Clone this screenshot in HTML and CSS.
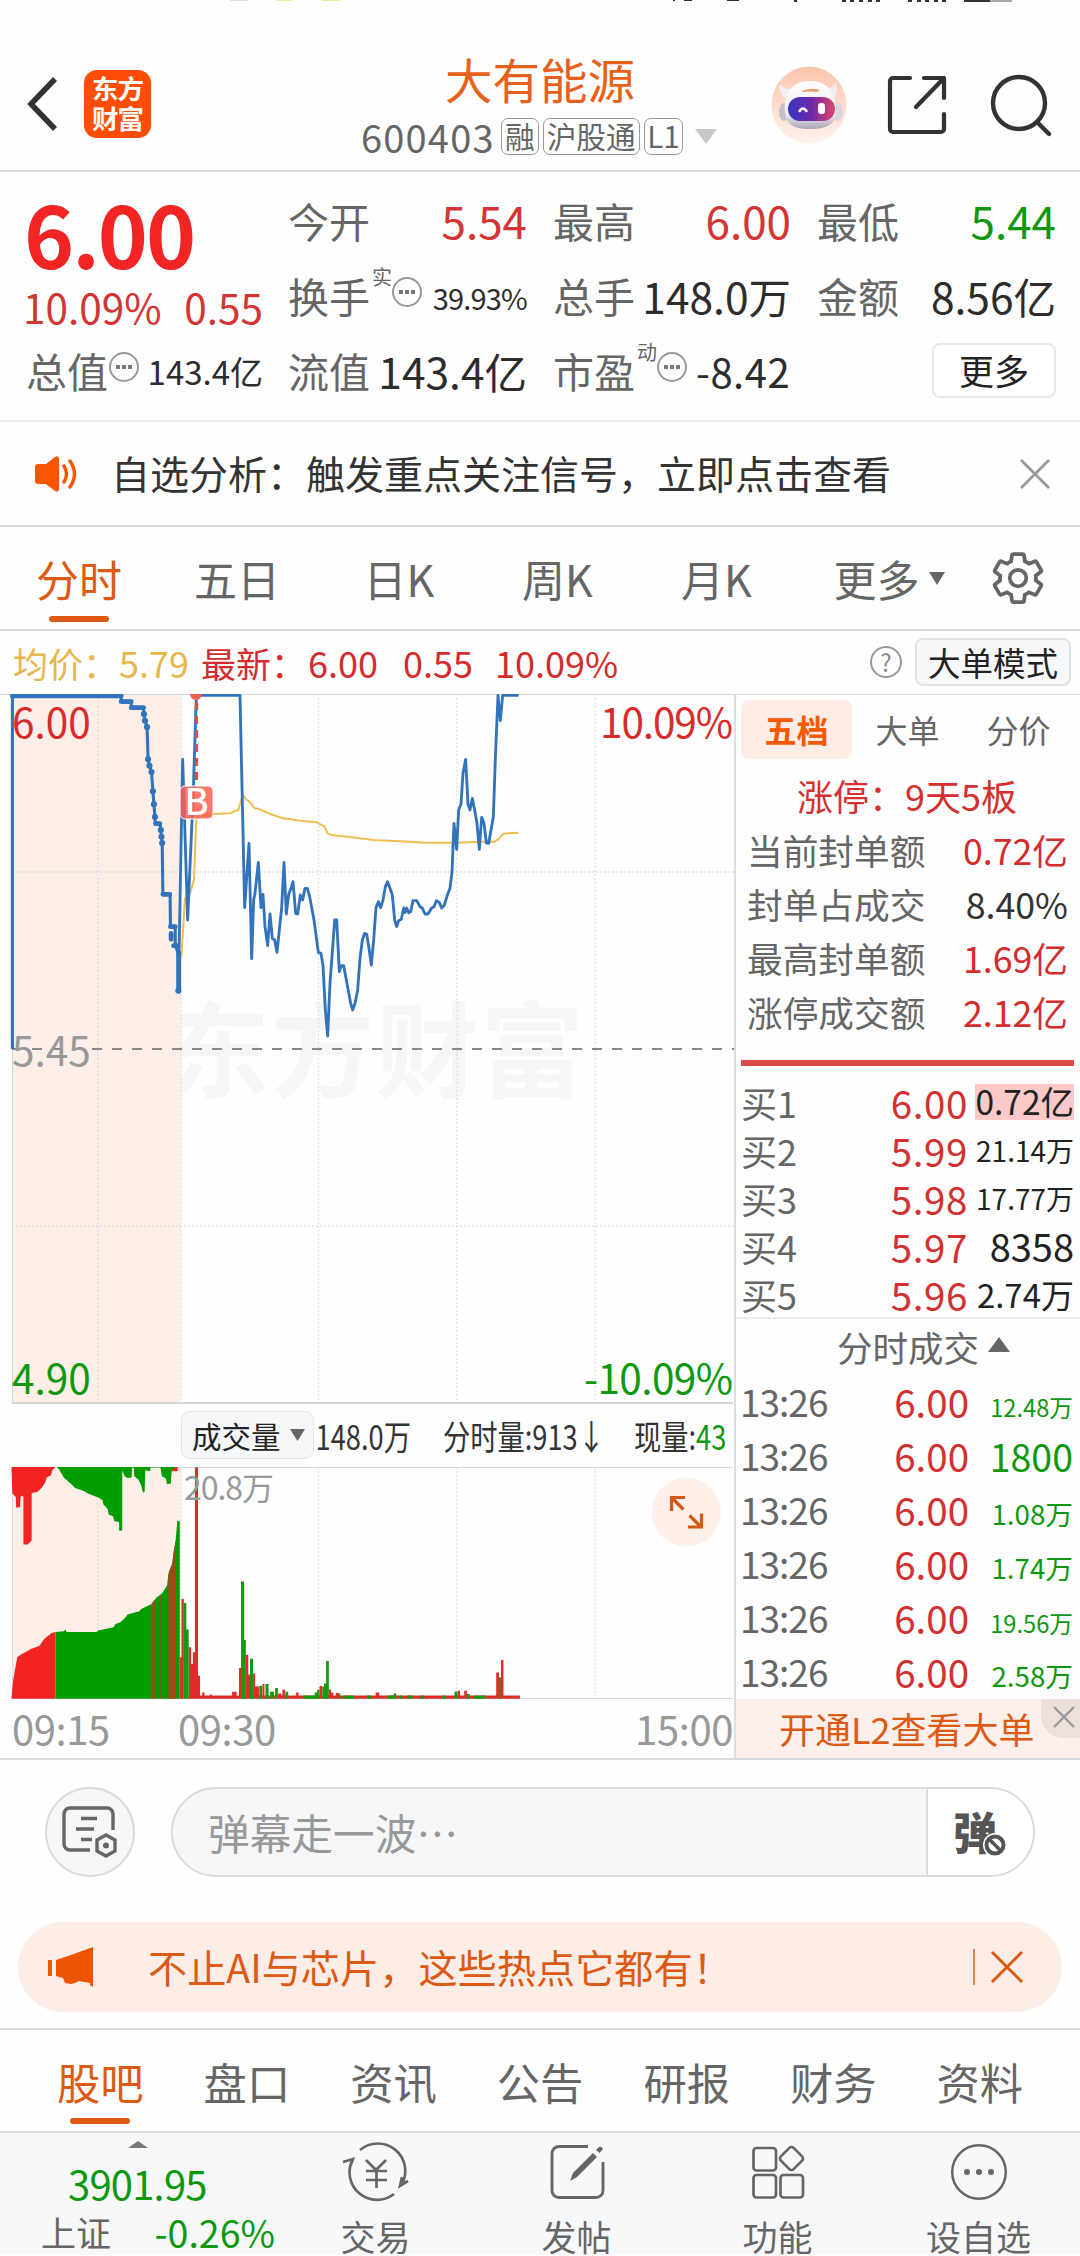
FILE: index.html
```html
<!DOCTYPE html>
<html lang="zh-CN">
<head>
<meta charset="utf-8">
<title>大有能源 600403</title>
<link rel="stylesheet" href="styles.css">
</head>
<body>
<div class="page">
  <svg class="status" width="1080" height="3" viewBox="0 0 1080 3">
    <path d="M230 0h18v1h-18z" fill="#f6d3e4"/><path d="M276 0h16v1h-16zM322 0h18v1h-18z" fill="#ecec9a"/>
    <path d="M673 0h2v1h-2zM684 0h8v1h-8zM727 0h12v1h-12zM794 0h3v2h-3zM842 0h4v2h-4zM850 0h4v2h-4zM859 0h4v2h-4zM868 0h4v2h-4zM876 0h4v2h-4zM908 0h4v2h-4zM917 0h4v2h-4zM925 0h4v2h-4zM934 0h4v2h-4zM942 0h4v2h-4zM964 0h26v2h-26z" fill="#333"/><path d="M990 0h22v2h-22z" fill="#aaa"/>
  </svg>

  <header class="header">
    <div class="header-left">
      <svg width="34" height="58" viewBox="0 0 34 58"><path d="M29 4 5 29l24 25" fill="none" stroke="#333" stroke-width="5.5"/></svg>
      <div class="logo"><span>东方</span><span>财富</span></div>
    </div>
    <div class="stock">
      <h1 class="stock-name">大有能源</h1>
      <div class="stock-sub">
        <span class="code">600403</span><span class="badge">融</span><span class="badge">沪股通</span><span class="badge badge-l1">L1</span>
        <svg class="sub-tri" width="22" height="15" viewBox="0 0 22 15"><path d="M0 0h22L11 15z" fill="#c9c9c9"/></svg>
      </div>
    </div>
    <div class="header-right">
      <svg width="76" height="78" viewBox="0 0 76 78">
        <defs>
          <linearGradient id="halo" x2="0" y2="1"><stop stop-color="#fdc5ab"/><stop offset="1" stop-color="#fff3ee"/></linearGradient>
          <linearGradient id="visor"><stop stop-color="#3a35c4"/><stop offset=".5" stop-color="#6c2aa8"/><stop offset="1" stop-color="#e2476b"/></linearGradient>
          <linearGradient id="helmet" x2="0" y2="1"><stop stop-color="#fff"/><stop offset=".7" stop-color="#ece9f2"/><stop offset="1" stop-color="#a9a5b5"/></linearGradient>
        </defs>
        <ellipse cx="38" cy="39" rx="37.5" ry="38.5" fill="url(#halo)"/>
        <ellipse cx="13" cy="46" rx="5" ry="9" fill="#c3bfcb"/><ellipse cx="67" cy="46" rx="5" ry="9" fill="#dad6df"/>
        <path d="M8 18q5 6 14 5l-6 10q-8-4-8-15zM65 16q-3 6-11 7l8 10q6-6 3-17z" fill="#f3eef2"/>
        <path d="M14 46C12 26 22 15 39 15s27 11 26 31c0 12-9 17-26 17S15 58 14 46z" fill="url(#helmet)"/>
        <rect x="17" y="31" width="47" height="24" rx="12" fill="url(#visor)"/>
        <path d="M28 46q4-7 8 0" fill="none" stroke="#fff" stroke-width="2.4"/><rect x="47" y="37" width="7" height="11" rx="3" fill="#fff"/>
        <path d="M31 25q9-4 18-1l-3 2q-7-1-15 0z" fill="#e5a06a"/>
      </svg>
      <svg width="60" height="60" viewBox="0 0 60 60" fill="none" stroke="#333" stroke-width="4.2" stroke-linecap="round" stroke-linejoin="round"><path d="M23 3H6a3 3 0 0 0-3 3v48a3 3 0 0 0 3 3h48a3 3 0 0 0 3-3V39M37 3h20v20M57 3 29 32"/></svg>
      <svg width="62" height="64" viewBox="0 0 62 64" fill="none" stroke="#333" stroke-width="4.4" stroke-linecap="round"><circle cx="29" cy="30" r="26"/><path d="M47 49 59 61"/></svg>
    </div>
  </header>

  <section class="quote">
    <div class="quote-main">
      <div class="price">6.00</div>
      <div class="change"><span>10.09%</span><span>0.55</span></div>
      <div class="cell"><span class="label">总值</span><svg class="dots" viewBox="0 0 32 32"><use href="#dots"/></svg><span class="val v33">143.4亿</span></div>
    </div>
    <div class="quote-grid">
      <div class="cell"><span class="label">今开</span><span class="val num red">5.54</span></div>
      <div class="cell"><span class="label">最高</span><span class="val num red">6.00</span></div>
      <div class="cell"><span class="label">最低</span><span class="val num green">5.44</span></div>
      <div class="cell"><span class="label">换手</span><sup>实</sup><svg class="dots" viewBox="0 0 32 32"><g id="dots"><circle cx="16" cy="16" r="14" fill="none" stroke="#999" stroke-width="2"/><path d="M8 14h4v4H8zM14 14h4v4h-4zM20 14h4v4h-4z" fill="#777"/></g></svg><span class="val v29">39.93%</span></div>
      <div class="cell"><span class="label">总手</span><span class="val">148.0万</span></div>
      <div class="cell"><span class="label">金额</span><span class="val">8.56亿</span></div>
      <div class="cell"><span class="label">流值</span><span class="val">143.4亿</span></div>
      <div class="cell"><span class="label">市盈</span><sup>动</sup><svg class="dots" viewBox="0 0 32 32"><use href="#dots"/></svg><span class="val v39">-8.42</span></div>
      <div class="cell"><button class="more">更多</button></div>
    </div>
  </section>

  <section class="notice">
    <svg width="46" height="38" viewBox="0 0 46 38"><path d="M2 12q0-3 3-3h8L22 2q4-2 4 2v30q0 4-4 2l-9-7H5q-3 0-3-3z" fill="#fa5500"/><path d="M31 11q5 8 0 16M37 6q9 13 0 26" fill="none" stroke="#fa5500" stroke-width="3.4" stroke-linecap="round"/></svg>
    <p>自选分析：触发重点关注信号，立即点击查看</p>
    <svg width="32" height="32" viewBox="0 0 32 32"><path d="m2 2 28 28M30 2 2 30" stroke="#999" stroke-width="2.8"/></svg>
  </section>

  <nav class="periods">
    <span class="active">分时</span><span>五日</span><span>日K</span><span>周K</span><span>月K</span>
    <span>更多<svg width="16" height="13" viewBox="0 0 16 13"><path d="M0 0h16L8 13z" fill="#666"/></svg></span>
    <span><svg width="60" height="60" viewBox="0 0 24 24" fill="none" stroke="#666" stroke-width="1.5"><path d="M19.14 12.94c.04-.3.06-.61.06-.94 0-.32-.02-.64-.07-.94l2.03-1.58c.18-.14.23-.41.12-.61l-1.92-3.32c-.12-.22-.37-.29-.59-.22l-2.39.96c-.5-.38-1.03-.7-1.62-.94l-.36-2.54c-.04-.24-.24-.41-.48-.41h-3.84c-.24 0-.43.17-.47.41l-.36 2.54c-.59.24-1.13.57-1.62.94l-2.39-.96c-.22-.08-.47 0-.59.22L2.74 8.87c-.12.21-.08.47.12.61l2.03 1.58c-.05.3-.09.63-.09.94s.02.64.07.94l-2.03 1.58c-.18.14-.23.41-.12.61l1.92 3.32c.12.22.37.29.59.22l2.39-.96c.5.38 1.03.7 1.62.94l.36 2.54c.05.24.24.41.48.41h3.84c.24 0 .44-.17.47-.41l.36-2.54c.59-.24 1.13-.56 1.62-.94l2.39.96c.22.08.47 0 .59-.22l1.92-3.32c.12-.22.07-.47-.12-.61l-2.01-1.58z"/><circle cx="12" cy="12" r="3.3"/></svg></span>
  </nav>

  <div class="info">
    <span class="yellow w107">均价：</span><span class="yellow w80">5.79</span><span class="red w108">最新：</span><span class="red w95">6.00</span><span class="red w94">0.55</span><span class="red">10.09%</span>
    <span class="help">?</span><button class="mode">大单模式</button>
  </div>

  <section class="market">
    <div class="charts">
      <svg class="chart" width="734" height="710" viewBox="0 694 734 710">
        <text class="watermark" x="166" y="1090" textLength="418">东方财富</text>
        <rect x="12" y="694" width="169" height="709" fill="#fdeee7"/>
        <g stroke="#d9d9d9" stroke-width="1.4" stroke-dasharray="1.5 2.5"><path d="M98 694v709M181 694v709M318.500 694v709M457 694v709M595 694v709M12 872h722M12 1226h722"/></g>
        <path d="M12.500 694v709M0 694.500h734" stroke="#d5d8da"/><path d="M12 1403h721" stroke="#d5d5d5" stroke-width="2"/>
        <path d="M12 1049h722" stroke="#888" stroke-width="2" stroke-dasharray="10 10"/>
        <text class="axis red" x="12" y="738">6.00</text><text class="axis red" x="733" y="738" text-anchor="end" textLength="133">10.09%</text>
        <text class="axis gray" x="12" y="1066">5.45</text>
        <text class="axis green" x="12" y="1394">4.90</text><text class="axis green" x="733" y="1394" text-anchor="end" textLength="149">-10.09%</text>
        <g fill="none" stroke-linejoin="round" transform="translate(160 680) scale(.33333)">
          <polyline stroke="#efbe4f" stroke-width="6" points="64,830 75,655 90,640 102,600 109,410 160,402 212,400 222,394 235,390 242,365 249,345 258,358 265,362 285,385 300,388 330,402 370,415 420,422 470,427 493,440 503,460 515,465 570,471 640,480 720,484 800,488 890,488 960,485 1003,485 1015,478 1030,461 1076,458"/>
          <polyline stroke="#3273bb" stroke-width="8.500" points="55,932 68,238 83,720 100,330 109,46 240,46 254,683 267,490 275,836 281,660 285,640 295,547 303,683 309,643 315,740 323,797 330,702 337,775 344,780 351,817 365,683 372,547 379,702 386,643 393,625 399,605 407,700 413,702 421,645 428,660 435,625 442,625 449,650 462,720 475,817 483,820 489,857 496,990 503,1068 510,910 517,817 524,720 530,720 538,875 544,857 551,857 558,895 572,970 578,990 585,970 593,930 600,835 607,780 614,760 620,762 627,805 634,855 641,780 648,683 655,665 662,683 669,660 676,620 683,605 690,625 697,645 704,720 710,740 716,722 724,718 731,684 735,698 740,684 746,698 752,695 759,662 770,662 780,680 787,684 795,702 804,702 815,684 822,680 829,662 838,668 845,684 853,675 862,645 870,625 876,577 882,430 890,508 896,390 903,373 909,280 917,238 924,373 930,390 937,355 944,390 951,430 958,508 965,412 972,430 979,489 986,490 993,450 1000,412 1006,238 1014,46 1021,122 1028,46 1076,46"/>
        </g>
        <g fill="none" stroke="#3273bb" stroke-linecap="round" stroke-linejoin="round" transform="translate(0 680) scale(.34435 .33333)">
          <polyline stroke-width="9" stroke-linecap="butt" points="36,1107 36,47 352,47 352,64 381,64 381,83 416,83 418,102 421,122 427,141 430,238 434,257 440,276 444,334 447,373 450,411 451,431 465,431 467,450 469,470 471,489 473,643 494,643 495,740 509,740 509,797 517,817 518,932"/>
          <path stroke-width="14" d="M36 48H352M352 65h29M381 83h36M452 431h12M473 643h20M495 740h14M497 760v18M504 797h12M519 817v115"/>
          <path stroke-width="18" d="M418 102h0M421 122h0M427 141h0M430 238h0M434 257h0M440 276h0M444 334h0M447 373h0M450 411h0M467 450h0M469 470h0M471 489h0M518 932h0"/>
        </g>
        <path d="M190 694h12a6 6 0 0 1-12 0z" fill="#f4604f"/>
        <path d="M196.500 702v85" stroke="#e8493f" stroke-width="3.200" stroke-dasharray="8 6"/>
        <rect x="180" y="786" width="33" height="33" rx="5" fill="#f95f50" fill-opacity=".85" stroke="#fff"/>
        <text class="marker" x="196.500" y="815" text-anchor="middle">B</text>
      </svg>
      <div class="volume-head">
        <button class="indicator">成交量<svg width="15" height="12" viewBox="0 0 15 12"><path d="M0 0h15L7.500 12z" fill="#666"/></svg></button>
        <span class="narrow n1">148.0万</span><span class="narrow n2">分时量:913↓</span><span class="narrow n3">现量:<b>43</b></span>
      </div>
      <svg class="chart" width="734" height="232" viewBox="0 1467 734 232">
        <rect x="12" y="1467" width="169" height="231" fill="#fdeee7"/>
        <path d="M98 1467v231M181 1467v231M318.500 1467v231M457 1467v231M595 1467v231" stroke="#d9d9d9" stroke-width="1.400" stroke-dasharray="1.5 2.5"/>
        <path d="M12 1467.500h721M12 1698.500h721M12.500 1467v231" stroke="#dcdcdc"/>
        <g transform="translate(0 1390) scale(.34435 .3342)">
          <path fill="#f22323" d="M33 228 36 310 46 320 47 352 58 350 60 318H68V462H80L92 450V308L108 305 122 292 132 275 135 262 148 255 152 240 163 228zM33 924 38 870 50 800 60 792 90 775 115 765 128 745 150 727 161 724V924zM498 228H516V243H498z"/>
          <path fill="#009d00" d="M163 228 172 238 185 262 205 280 218 293 245 303 255 310 285 322 298 330 300 342 312 355 316 373 328 378 332 393 346 395V422L355 420V240L362 258 370 263 382 262 384 232H388L390 258 402 268 410 285 415 307 420 305 422 240 436 243 437 232H466L470 258 482 265 485 282 496 280 499 238 521 228zM161 724 185 722 190 717 193 724H280L285 720 330 710 335 700 350 695 365 680 370 672 405 662 410 655 440 640 455 620 470 610 485 585 490 545 500 520 505 480 510 450 515 392H522V924H161z"/>
          <path fill="#8b5516" d="M439 642 451 626V924H439zM488 556 500 520 505 480 511 450V924H488z"/>
          <path fill="#c03a1c" d="M466 612h4V924h-4zM497 530h3V924h-3zM506 480h3V924h-3z"/>
          <path fill="#e32a2a" d="M522 800h5V924h-5zM527 625h7V924h-7zM548 770h7V924h-7zM555 820h6V924h-6zM560 785h7V924h-7zM566 231h9V924h-9zM575 855h6V924h-6zM581 914H1510V924H581zM587 905h7v15h-7zM609 911h6v9h-6zM674 903h13v17h-13zM694 832h7V924h-7zM714 792h7V924h-7zM721 852h6V924h-6zM735 848h6V924h-6zM741 887h11V924h-11zM762 880h6V924h-6zM808 908h9v16h-9zM820 897h8V924h-8zM860 905h7v19h-7zM928 886h8V924h-8zM955 896h6v28h-6zM961 905h7v19h-7zM975 907h10v17h-10zM1091 905h10v19h-10zM1330 900h6v24h-6zM1348 900h8v24h-8zM1441 845h8V924h-8zM1455 808h7V924h-7z"/>
          <path fill="#129a10" d="M534 637h7V924h-7zM541 717h7V924h-7zM700 573h9V924h-9zM709 748h5V924h-5zM726 804h9V924h-9zM753 885h8V924h-8zM771 880h9V924h-9zM784 903h12v21h-12zM799 892h8V924h-8zM829 903h8v21h-8zM880 914h34v10h-34zM914 905h7v19h-7zM921 897h7v27h-7zM936 888h5v36h-5zM941 878h6v46h-6zM947 811h8V924h-8zM985 909h4v15h-4zM998 914h30v10h-30zM1066 914h12v10h-12zM1125 914h18v10h-18zM1143 908h7v16h-7zM1160 914h8v10h-8zM1184 914h14v10h-14zM1222 914h10v10h-10zM1285 914h10v10h-10zM1320 902h9v22h-9zM1356 910h8v14h-8zM1376 914h34v10h-34z"/>
          <path fill="#6d6e10" d="M1449 860h6v64h-6z"/>
        </g>
        <text class="vol-label" x="184" y="1500" textLength="90">20.8万</text>
        <circle cx="686.500" cy="1512" r="34.500" fill="#feefe8"/>
        <path d="M671.500 1511v-13.500H685M673 1499l10.500 10.500M701.500 1513.500V1527H688M700 1526l-10.500-10.500" fill="none" stroke="#d65a16" stroke-width="3.200"/>
      </svg>
      <div class="times"><span>09:15</span><span>09:30</span><span>15:00</span></div>
    </div>

    <aside class="panel">
      <div class="panel-tabs"><span class="active">五档</span><span>大单</span><span>分价</span></div>
      <div class="limit-title">涨停：9天5板</div>
      <dl class="limit">
        <div><dt>当前封单额</dt><dd class="red">0.72亿</dd></div>
        <div><dt>封单占成交</dt><dd>8.40%</dd></div>
        <div><dt>最高封单额</dt><dd class="red">1.69亿</dd></div>
        <div><dt>涨停成交额</dt><dd class="red">2.12亿</dd></div>
      </dl>
      <div class="bar"></div>
      <div class="book">
        <div><span>买1</span><span class="p">6.00</span><span class="q q34 hl">0.72亿</span></div>
        <div><span>买2</span><span class="p">5.99</span><span class="q q28">21.14万</span></div>
        <div><span>买3</span><span class="p">5.98</span><span class="q q28">17.77万</span></div>
        <div><span>买4</span><span class="p">5.97</span><span class="q q37">8358</span></div>
        <div><span>买5</span><span class="p">5.96</span><span class="q q33">2.74万</span></div>
      </div>
      <div class="ticks-title">分时成交<svg width="22" height="15" viewBox="0 0 22 15"><path d="M0 15h22L11 0z" fill="#666"/></svg></div>
      <div class="ticks">
        <div><span>13:26</span><span class="p">6.00</span><span class="q q23">12.48万</span></div>
        <div><span>13:26</span><span class="p">6.00</span><span class="q q38">1800</span></div>
        <div><span>13:26</span><span class="p">6.00</span><span class="q q27">1.08万</span></div>
        <div><span>13:26</span><span class="p">6.00</span><span class="q q27">1.74万</span></div>
        <div><span>13:26</span><span class="p">6.00</span><span class="q q23">19.56万</span></div>
        <div><span>13:26</span><span class="p">6.00</span><span class="q q27">2.58万</span></div>
      </div>
      <div class="promo">开通L2查看大单<span class="promo-close"><svg width="22" height="22" viewBox="0 0 22 22"><path d="m1 1 20 20M21 1 1 21" stroke="#999" stroke-width="2.4"/></svg></span></div>
    </aside>
  </section>

  <section class="danmu">
    <div class="round">
      <svg width="58" height="54" viewBox="0 0 58 54" fill="none" stroke="#666" stroke-width="3.400"><path d="M52 25V9a6 6 0 0 0-6-6H9a6 6 0 0 0-6 6v30a6 6 0 0 0 6 6h20M20 13.500h16M15 24h18M20 34.500h11"/><path d="m45 30 9 5v11l-9 5-9-5V35z"/><circle cx="45" cy="40.500" r="3" fill="#666" stroke="none"/></svg>
    </div>
    <div class="danmu-box">
      <span class="placeholder">弹幕走一波⋯</span>
      <div class="danmu-toggle"><span>弹</span><svg width="26" height="26" viewBox="0 0 26 26"><circle cx="13" cy="13" r="12" fill="#fff"/><circle cx="13" cy="13" r="8.500" fill="#fff" stroke="#555" stroke-width="4"/><path d="m7 7 12 12" stroke="#555" stroke-width="3.500"/></svg></div>
    </div>
  </section>

  <section class="banner">
    <svg width="46" height="40" viewBox="0 0 46 40" fill="#ee5500"><path d="M0 13h4v16H0zM8 13l12-4L45 0v40l-3-2v-2l-11-2-4 2-4 1-6-1-2-5-7-2z"/></svg>
    <p>不止AI与芯片，这些热点它都有！</p>
    <i></i>
    <svg width="34" height="34" viewBox="0 0 34 34"><path d="m2 2 30 30M32 2 2 32" stroke="#dd5a14" stroke-width="3"/></svg>
  </section>

  <nav class="sections">
    <span class="active">股吧</span><span>盘口</span><span>资讯</span><span>公告</span><span>研报</span><span>财务</span><span>资料</span>
  </nav>

  <footer class="toolbar">
    <div class="index">
      <svg width="20" height="7" viewBox="0 0 20 7"><path d="M0 7h20L10 0z" fill="#777"/></svg>
      <div class="index-val">3901.95</div>
      <div class="index-row"><span>上证</span><span class="green">-0.26%</span></div>
    </div>
    <div class="tool"><svg width="68" height="60" viewBox="0 0 68 60" fill="none" stroke="#666" stroke-width="2.700"><path d="M18 8A27.500 27.500 0 0 1 60 42M52 52A27.500 27.500 0 0 1 11 17M1 20l10-3-3 8M66 39l-8 5 2-9M24 18l10 10 10-10M24 29h21M24 38h21M34.500 28v18"/></svg><span>交易</span></div>
    <div class="tool"><svg width="60" height="60" viewBox="0 0 60 60" fill="none" stroke="#666" stroke-width="2.900"><path d="M41 4.500H12a7 7 0 0 0-7 7v37a7 7 0 0 0 7 7h37a7 7 0 0 0 7-7V20"/><path d="m23 39 3-8L46 11l4 4-20 20zM49 8l3-3q3-1 4 2l-3.500 4z" fill="#666" stroke="none"/></svg><span>发帖</span></div>
    <div class="tool"><svg width="60" height="60" viewBox="0 0 60 60" fill="none" stroke="#666" stroke-width="2.700"><rect x="5.500" y="6" width="22.500" height="22.500" rx="3"/><rect x="5.500" y="33" width="22.500" height="22.500" rx="3"/><rect x="32.500" y="33" width="22.500" height="22.500" rx="3"/><rect x="34.500" y="7.500" width="18" height="18" rx="3" transform="rotate(45 43.500 16.500)"/></svg><span>功能</span></div>
    <div class="tool"><svg width="60" height="60" viewBox="0 0 60 60"><circle cx="30" cy="30" r="26.800" fill="none" stroke="#666" stroke-width="2.500"/><g fill="#666"><circle cx="18" cy="30" r="3"/><circle cx="30" cy="30" r="3"/><circle cx="42" cy="30" r="3"/></g></svg><span>设自选</span></div>
  </footer>
</div>
</body>
</html>
```
FILE: styles.css
```css
* { box-sizing: border-box; margin: 0; padding: 0; }
body {
  width: 1080px; height: 2256px; overflow: hidden; background: #fefefe; color: #333;
  font-family: "Noto Sans CJK SC", sans-serif;
}
.page { display: flex; flex-direction: column; width: 1080px; height: 2256px; overflow: hidden; }
svg { display: block; flex: none; }
span, p, dt, dd { white-space: nowrap; }
button { font-family: inherit; color: #222; white-space: nowrap; }
.red { color: #d42c2c; fill: #d92b2b; }
.green { color: #0f980f; fill: #0f980f; }
.gray { fill: #999; }
.yellow { color: #e7b74b; }

/* header */
.status { height: 3px; }
.header { display: grid; grid-template-columns: 360px 1fr 310px; height: 169px; border-bottom: 2px solid #d8dcdf; }
.header-left { display: flex; align-items: center; gap: 24px; padding: 34px 0 0 26px; height: 168px; }
.logo {
  display: flex; flex-direction: column; justify-content: center; align-items: center;
  width: 67px; height: 68px; border-radius: 13px; background: #ff4d05; color: #fff;
  font-size: 26.500px; font-weight: 700; line-height: 30px; padding-bottom: 2px; letter-spacing: -1px;
}
.stock { padding-top: 46px; }
.stock-name { padding-left: 85px; font-size: 47.500px; font-weight: 400; line-height: 59px; color: #e8611a; }
.stock-sub { display: flex; align-items: center; height: 57px; }
.code { width: 141px; padding-left: 1px; font-size: 38px; letter-spacing: 1.2px; color: #666; }
.badge {
  height: 37px; margin-right: 4px; padding: 0 3px; border: 1.5px solid #999; border-radius: 7px;
  font-size: 29.700px; line-height: 33px; color: #666;
}
.badge-l1 { padding: 0 2.500px; }
.sub-tri { margin-left: 8px; }
.header-right { display: flex; align-items: center; gap: 38px; padding: 36px 0 0 1px; height: 168px; }
.header-right svg:nth-child(2) { margin-left: 2px; }
.header-right svg:last-child { margin-left: 5px; }

/* quote */
.quote { display: flex; gap: 26px; height: 250px; padding: 12px 24px 0 27px; border-bottom: 2px solid #ececec; }
.quote-main { width: 236px; }
.price { height: 96px; font-size: 85px; font-weight: 700; line-height: 96px; letter-spacing: -2px; margin-left: -3px; color: #f22424; }
.change { display: flex; justify-content: space-between; height: 54px; font-size: 40.500px; line-height: 54px; color: #d43434; margin-left: -4px; }
.quote-grid { display: grid; grid-template-columns: 238px 237px 238px; grid-auto-rows: 75px; column-gap: 27px; }
.cell { display: flex; align-items: center; height: 75px; margin-top: -1px; padding-bottom: 1px; }
.label { font-size: 41px; color: #666; margin-left: -1px; }
.val { margin-left: auto; font-size: 42.500px; color: #2c2c2c; }
.num { font-size: 44px; }
.val.red { color: #d43434; }
.val.green { color: #0f980f; }
.v33 { font-size: 33px; padding-top: 1px; }
.v29 { font-size: 29px; padding-top: 3px; letter-spacing: -.8px; }
.v39 { font-size: 40px; letter-spacing: .5px; margin-right: auto; margin-left: 8px; padding-top: 1px; }
.dots { width: 32px; height: 32px; margin-top: -7px; }
.cell sup { align-self: flex-start; margin: 7px -1px 0 2px; font-size: 20px; line-height: 24px; color: #666; }
.more { width: 124px; height: 55px; margin-left: auto; border: 2px solid #e6e8ea; border-radius: 8px; background: #fff; font-size: 35px; line-height: 46px; }

/* notice */
.notice { display: flex; align-items: center; height: 105px; padding: 0 29px 0 33px; border-bottom: 2px solid #d8dbdd; }
.notice p { flex: 1; margin-left: 32px; padding-bottom: 3px; font-size: 39px; }

/* chart period tabs */
.periods { display: grid; grid-template-columns: 158px 158px 166px 151px 167px 178px 79px; height: 104px; border-bottom: 2px solid #d8dbdd; }
.periods span { display: flex; flex-direction: column; align-items: center; justify-content: center; font-size: 43px; color: #666; }
.periods span:nth-child(6) { flex-direction: row; gap: 9px; }
.periods .active, .sections .active { position: relative; color: #dd5a14; }
.periods .active::after, .sections .active::after {
  content: ""; position: absolute; bottom: 7px; left: calc(50% - 30px); width: 60px; height: 6px; border-radius: 3px; background: #dd5a14;
}

/* info line */
.info { display: flex; align-items: center; height: 63px; padding: 0 9px 1px 13px; font-size: 36px; }
.w107 { width: 106px; font-size: 35px; }
.w80 { width: 82px; }
.w108 { width: 107px; font-size: 35px; }
.w95 { width: 95px; }
.w94 { width: 92px; }
.help { width: 32px; height: 32px; margin: 0 13px 0 auto; border: 2px solid #999; border-radius: 50%; font-size: 24px; line-height: 28px; text-align: center; color: #888; }
.mode { width: 156px; height: 48px; border: 2px solid #e0e3e6; border-radius: 8px; background: #f7f8fa; font-size: 32.500px; line-height: 42px; }

/* market */
.market { display: flex; height: 1066px; border-bottom: 2px solid #d8dbdd; }
.charts { width: 734px; }
.watermark { font-size: 104px; font-weight: 700; fill: #f6f6f6; }
.axis { font-size: 40.500px; }
.marker { font-size: 36px; font-weight: 500; fill: #fff; }
.vol-label { font-size: 32px; fill: #999; }
.volume-head { display: flex; align-items: center; height: 63px; padding: 0 0 2px 181px; }
.indicator { display: flex; align-items: center; gap: 9px; width: 133px; height: 48px; padding-left: 10px; border: 1.5px solid #e2e5e7; border-radius: 9px; background: #f6f7f9; font-size: 29.500px; }
.narrow { font-size: 34.500px; transform: scaleX(.79); transform-origin: left; color: #333; }
.narrow b { font-weight: 400; color: #0f980f; }
.n1 { width: 129px; padding-left: 2px; }
.n2 { width: 191px; }
.n3 { width: 90px; }
.times { display: grid; grid-template-columns: 166px 1fr auto; padding: 0 1px 0 12px; font-size: 40px; line-height: 59px; letter-spacing: -.4px; color: #999; }

/* order panel */
.panel { flex: 1; border-left: 2px solid #dadee0; border-top: 1px solid #d8dbdd; }
.panel-tabs { display: grid; grid-template-columns: 111px 111px 111px; height: 71px; padding: 5px 0 7px 5px; }
.panel-tabs span { font-size: 32px; line-height: 59px; text-align: center; color: #666; border-radius: 8px; }
.panel-tabs .active { font-weight: 700; color: #f75800; background: #feede5; }
.limit-title { height: 57px; padding-left: 61px; font-size: 36px; line-height: 58px; color: #d43030; }
.limit div { display: flex; justify-content: space-between; height: 54px; padding: 0 12px 0 11px; font-size: 35.700px; line-height: 54px; }
.limit dt { color: #666; }
.bar { height: 6px; margin: 21px 6px 12px 5px; background: #df4b4b; }
.book { height: 241px; border-bottom: 2px solid #ececec; }
.book div { display: grid; grid-template-columns: 60px 1fr 106px; align-items: center; height: 48px; padding: 0 6px 0 5px; font-size: 36px; line-height: 48px; color: #666; }
.book .p, .ticks .p { font-size: 38.500px; text-align: right; color: #d43030; }
.book .p { letter-spacing: .6px; }
.q { justify-self: end; color: #222; }
.q38 { font-size: 37.500px; } .q37 { font-size: 38px; } .q34 { font-size: 33.500px; } .q33 { font-size: 33px; }
.q28 { font-size: 28px; } .q27 { font-size: 27.700px; padding-top: 4px; } .q23 { font-size: 23.700px; padding-top: 6px; }
.hl { height: 36px; line-height: 34px; background: #fbc9c9; }
.ticks-title { display: flex; align-items: center; gap: 9px; height: 56px; padding: 0 0 2px 101px; font-size: 35.500px; color: #666; }
.ticks-title svg { margin-top: -4px; }
.ticks { height: 324px; }
.ticks div { display: grid; grid-template-columns: 100px 129px 1fr; height: 54px; padding: 0 7px 0 4px; font-size: 37px; line-height: 53px; letter-spacing: -1px; color: #666; }
.ticks .p { letter-spacing: 0; }
.ticks .q { color: #0f980f; letter-spacing: 0; }
.promo { position: relative; height: 59px; padding-left: 43px; background: #fdefe9; font-size: 36px; line-height: 59px; color: #dd5a14; }
.promo-close { position: absolute; top: 0; right: 0; display: flex; align-items: center; justify-content: center; width: 39px; height: 39px; padding-left: 6px; padding-bottom: 4px; border-bottom-left-radius: 22px; background: #ece0db; }

/* comments */
.danmu { display: flex; gap: 36px; padding: 27px 45px 0; height: 162px; }
.round { display: flex; align-items: center; justify-content: center; width: 90px; height: 90px; border: 2px solid #d9dcdf; border-radius: 50%; background: #f6f7f9; }
.danmu-box { display: flex; width: 864px; height: 90px; border: 2px solid #d9dcdf; border-radius: 45px; background: #f6f7f9; overflow: hidden; }
.placeholder { flex: 1; padding-left: 35px; font-size: 41.700px; line-height: 86px; color: #999; }
.danmu-toggle { display: flex; align-items: center; width: 107px; padding-left: 25px; border-left: 2px solid #d9dcdf; background: #fff; color: #555; font-size: 44px; font-weight: 900; line-height: 80px; }
.danmu-toggle span { padding-bottom: 3px; }
.danmu-toggle svg { margin: 26px 0 0 -15px; }
.banner { display: flex; align-items: center; height: 90px; margin: 0 18px 16px; padding: 0 38px 0 30px; border-radius: 45px; background: #fceee6; color: #dd5a14; }
.banner p { flex: 1; margin-left: 54px; padding-bottom: 2px; font-size: 39.200px; }
.banner i { width: 2px; height: 36px; margin-right: 15px; background: #d98a5f; }

/* section tabs */
.sections { display: flex; gap: 60px; height: 105px; padding-left: 57px; border-top: 2px solid #d8dbdd; border-bottom: 2px solid #d8dbdd; font-size: 43.300px; line-height: 103px; color: #666; }

/* toolbar */
.toolbar { display: grid; grid-template-columns: 275px 201px 201px 201px 201px; height: 122px; background: #f7f8fa; color: #666; }
.index { padding: 8px 0 0 41px; }
.index svg { margin-left: 87px; }
.index-val { margin-left: 27px; font-size: 40px; line-height: 60px; height: 60px; letter-spacing: -.8px; color: #0f980f; margin-top: 5px; }
.index-row { display: flex; justify-content: space-between; font-size: 35px; line-height: 37px; }
.index-row .green { font-size: 37.500px; }
.tool { display: flex; flex-direction: column; align-items: center; padding-top: 9px; font-size: 35px; line-height: 68px; }
```
